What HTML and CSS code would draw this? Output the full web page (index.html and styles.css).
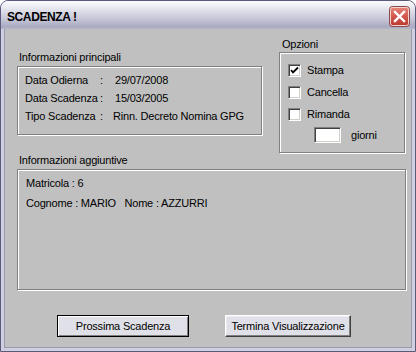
FILE: index.html
```html
<!DOCTYPE html>
<html>
<head>
<meta charset="utf-8">
<link rel="stylesheet" href="styles.css">
</head>
<body>
<div class="window">
  <div class="titlebar">
    <span class="title">SCADENZA !</span>
    <div class="close">
      <svg width="21" height="21" viewBox="0 0 21 21">
        <defs>
          <linearGradient id="cg" x1="0" y1="0" x2="0" y2="1">
            <stop offset="0" stop-color="#e98a7f"/>
            <stop offset="0.5" stop-color="#d2574c"/>
            <stop offset="1" stop-color="#b8372e"/>
          </linearGradient>
        </defs>
        <rect x="0.5" y="0.5" width="20" height="20" rx="3" fill="url(#cg)" stroke="#8a4a4a"/>
        <rect x="1.5" y="1.5" width="18" height="18" rx="2" fill="none" stroke="#f4d4d0" stroke-width="1"/>
        <path d="M6 6 L15 15 M15 6 L6 15" stroke="#ffffff" stroke-width="2.4" stroke-linecap="square"/>
      </svg>
    </div>
  </div>
  <div class="client">
    <div class="top">
      <div class="col-main">
        <div class="label">Informazioni principali</div>
        <div class="group group-main">
          <span>Data Odierna</span><span>:</span><span>29/07/2008</span>
          <span>Data Scadenza</span><span>:</span><span>15/03/2005</span>
          <span>Tipo Scadenza</span><span>:</span><span class="shift">Rinn. Decreto Nomina GPG</span>
        </div>
      </div>
      <div class="col-opt">
        <div class="label label-opt">Opzioni</div>
        <div class="group group-opt">
          <div class="opt-row"><span class="check"><svg width="9" height="9" viewBox="0 0 9 9"><path d="M1 4 L3 6.5 L8 1.5" stroke="#000" stroke-width="1.8" fill="none"/></svg></span><span>Stampa</span></div>
          <div class="opt-row"><span class="check"></span><span>Cancella</span></div>
          <div class="opt-row"><span class="check"></span><span>Rimanda</span></div>
          <div class="opt-row days"><span class="field"></span><span class="days-label">giorni</span></div>
        </div>
      </div>
    </div>
    <div class="label">Informazioni aggiuntive</div>
    <div class="group group-extra">
      <div>Matricola : 6</div>
      <div class="pre">Cognome : MARIO   Nome : AZZURRI</div>
    </div>
    <div class="buttons">
      <div class="btn btn-default"><span>Prossima Scadenza</span></div>
      <div class="btn btn-wide"><span>Termina Visualizzazione</span></div>
    </div>
  </div>
</div>
</body>
</html>
```
FILE: styles.css
```css
* { box-sizing: border-box; }
html, body {
  margin: 0;
  padding: 0;
  background: #ffffff;
}
body {
  font-family: "Liberation Sans", Arial, sans-serif;
  font-size: 11px;
  letter-spacing: -0.2px;
  color: #000;
}
.window {
  width: 416px;
  height: 352px;
  border: 1px solid #5a5a7c;
  border-radius: 8px 8px 0 0;
  overflow: hidden;
  background: #cfcfdf;
  display: flex;
  flex-direction: column;
}
.titlebar {
  height: 28px;
  flex: none;
  display: flex;
  align-items: center;
  justify-content: space-between;
  padding: 0 5px 0 6px;
  background: linear-gradient(#fbfbfd 0%, #ececf3 20%, #d6d6e3 45%, #bcbcd0 75%, #a9a9c1 92%, #b8b8cc 100%);
}
.title {
  font-weight: bold;
  font-size: 12px;
  letter-spacing: -0.4px;
  margin-top: 3px;
}
.close {
  width: 21px;
  height: 21px;
  margin-top: 3px;
  display: flex;
}
.client {
  flex: none;
  margin: 0 3px;
  height: 319px;
  background: #c0c0c0;
  border-left: 1px solid #9898b2;
  border-right: 1px solid #9898b2;
  border-bottom: 1px solid #9898b2;
  padding: 0 6px 0 12px;
}
.top {
  display: flex;
  align-items: flex-start;
  gap: 17px;
  height: 124px;
}
.label {
  line-height: 14px;
  padding-left: 2px;
}
.group {
  border: 1px solid #808080;
  box-shadow: inset 1px 1px #ffffff, 1px 1px #ffffff;
}
.col-main {
  margin-top: 21px;
  width: 245px;
}
.group-main {
  margin-top: 2px;
  height: 69px;
  display: grid;
  grid-template-columns: 75px 15px auto;
  grid-auto-rows: 18px;
  line-height: 18px;
  padding: 4px 0 0 7px;
}
.group-main .shift { margin-left: -2px; }
.col-opt {
  margin-top: 8px;
  width: 126px;
}
.label-opt { padding-left: 3px; }
.group-opt {
  margin-top: 1px;
  height: 101px;
  padding: 6px 0 0 8px;
  display: flex;
  flex-direction: column;
}
.opt-row {
  height: 22px;
  display: flex;
  align-items: center;
}
.check {
  width: 13px;
  height: 13px;
  background: #fff;
  border-top: 1px solid #808080;
  border-left: 1px solid #808080;
  border-right: 1px solid #ffffff;
  border-bottom: 1px solid #ffffff;
  box-shadow: inset 1px 1px #404040, inset -1px -1px #d4d0c8;
  margin-right: 6px;
  display: flex;
  align-items: center;
  justify-content: center;
}
.days {
  height: 20px;
  align-items: flex-start;
}
.field {
  margin-top: 2px;
  margin-left: 26px;
  width: 27px;
  height: 16px;
  background: #fff;
  border-top: 1px solid #808080;
  border-left: 1px solid #808080;
  border-right: 1px solid #ffffff;
  border-bottom: 1px solid #ffffff;
  box-shadow: inset 1px 1px #404040, inset -1px -1px #d4d0c8;
}
.days-label {
  margin-left: 10px;
  line-height: 20px;
}
.group-extra {
  margin-top: 2px;
  width: 389px;
  height: 121px;
  padding: 3px 0 0 8px;
  line-height: 20px;
}
.pre { white-space: pre; }
.buttons {
  margin-top: 25px;
  padding-left: 40px;
  display: flex;
  gap: 36px;
}
.btn {
  height: 22px;
  display: flex;
  align-items: center;
  justify-content: center;
  background: #e0e0e8;
}
.btn-default {
  width: 132px;
  border: 1px solid #000;
  box-shadow: inset 1px 1px #ffffff, inset -1px -1px #808080;
}
.btn-wide {
  width: 126px;
  border-top: 1px solid #ffffff;
  border-left: 1px solid #ffffff;
  border-right: 1px solid #404040;
  border-bottom: 1px solid #404040;
  box-shadow: inset -1px -1px #808080, inset 1px 1px #ececf0;
}
```
